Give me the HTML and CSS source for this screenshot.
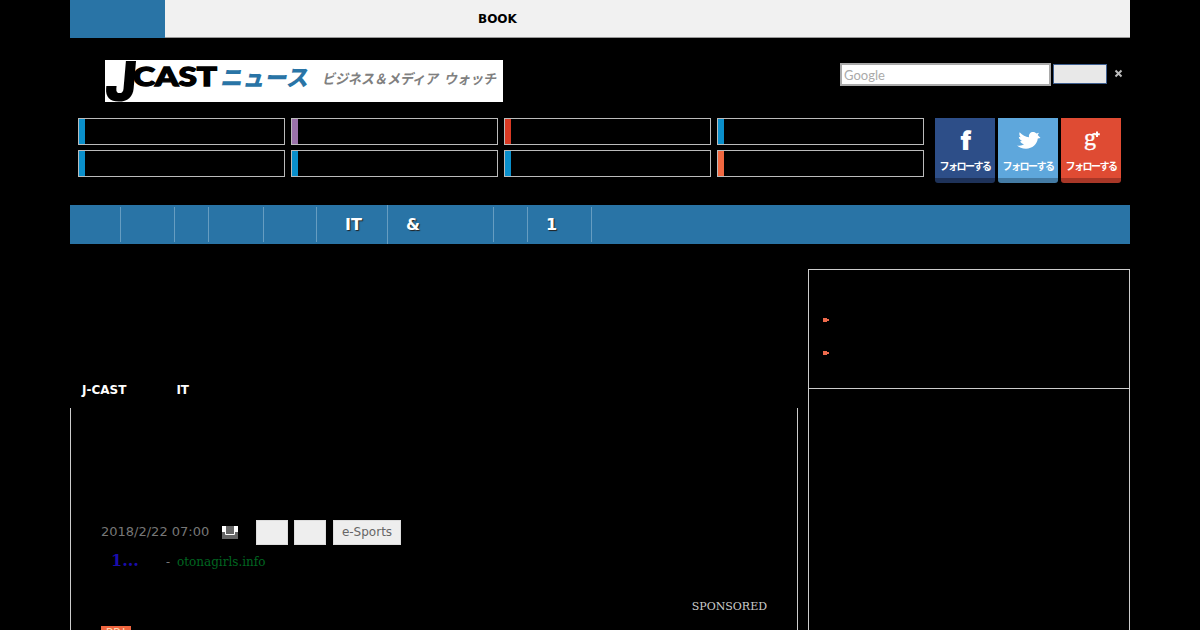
FILE: index.html
```html
<!DOCTYPE html>
<html lang="ja">
    <head>
        <meta charset="UTF-8"><meta name="viewport" content="width=device-width, initial-scale=1.0"><title>J-CAST</title>
        <link rel="stylesheet" href="styles.css">
    </head>
    <body>
        <div class="wrapper">
            <div class="topbar">
                <a class="topbar_current"></a>
                <a class="topbar_link">BOOK</a>
            </div>
            <header class="header">
                <div class="masthead">
                    <svg class="logo" width="398" height="42" viewBox="0 0 398 42">
                        <rect width="398" height="42" fill="#fff"/>
                        <text class="logo_j" transform="translate(-1 41) skewX(-5)" textLength="31" lengthAdjust="spacingAndGlyphs">J</text>
                        <text class="logo_cast" x="28" y="26" textLength="84" lengthAdjust="spacingAndGlyphs">CAST</text>
                        <text class="logo_news" transform="translate(115 26) skewX(-10)" textLength="88" lengthAdjust="spacingAndGlyphs">ニュース</text>
                        <text class="logo_copy" transform="translate(217 24) skewX(-12)" textLength="116" lengthAdjust="spacingAndGlyphs">ビジネス＆メディア</text>
                        <text class="logo_copy" transform="translate(339 24) skewX(-12)" textLength="52" lengthAdjust="spacingAndGlyphs">ウォッチ</text>
                    </svg>
                    <form class="search">
                        <input class="search_text" type="text" placeholder="Google">
                        <button class="search_button" type="button"></button>
                        <svg class="search_close" width="9" height="9" viewBox="0 0 9 9"><path d="M1.5 1.5l6 6M7.5 1.5l-6 6" stroke="#bbb" stroke-width="2"/></svg>
                    </form>
                </div>
                <div class="links">
                    <div class="sites">
                        <a class="site"></a>
                        <a class="site purple"></a>
                        <a class="site red"></a>
                        <a class="site"></a>
                        <a class="site"></a>
                        <a class="site"></a>
                        <a class="site"></a>
                        <a class="site orange"></a>
                    </div>
                    <div class="social">
                        <a class="follow facebook">
                            <svg width="24" height="24" viewBox="0 0 24 24"><text class="icon_f" x="7.5" y="22" textLength="11" lengthAdjust="spacingAndGlyphs">f</text></svg>
                            <span>フォローする</span>
                        </a>
                        <a class="follow twitter">
                            <svg width="24" height="24" viewBox="0 0 24 24"><path fill="#fff" d="M1 17.500C4 18 6.500 17.500 8 16.300 6 15.800 4.500 14.500 4.200 13.300L6 13C4 12 2.800 10.500 2.800 8.800L4.600 9.200C3.500 8 3 6 3.600 4.300 6.500 7.500 9.500 9 13 9.300 12.500 6 14.500 4 17 4c1.500 0 2.700.600 3.500 1.500L23 4.700l-1.300 2.200L24.500 10l-2.700.6C21 16.500 16.500 20.700 10 20.700 6 20.700 3 19.500 1 17.500z"/></svg>
                            <span>フォローする</span>
                        </a>
                        <a class="follow google">
                            <svg width="24" height="24" viewBox="0 0 24 24"><text class="icon_g" x="5" y="17">g</text><path d="M18 3.500v5.500M15.200 6.200h5.600" stroke="#fff" stroke-width="2"/></svg>
                            <span>フォローする</span>
                        </a>
                    </div>
                </div>
            </header>
            <nav class="nav">
                <a class="w50"></a>
                <a class="w53"></a>
                <a class="w33"></a>
                <a class="w54"></a>
                <a class="w52"></a>
                <a class="nav_it">IT</a>
                <a class="nav_and">&amp;</a>
                <a class="w33"></a>
                <a class="nav_one">1</a>
            </nav>
            <div class="content">
                <main class="main">
                    <div class="breadcrumb">
                        <a>J-CAST</a>
                        <a>IT</a>
                    </div>
                    <article class="article">
                        <div class="meta">
                            <time>2018/2/22 07:00</time>
                            <svg class="print" width="16" height="13" viewBox="0 0 16 13">
                                <path fill="#666" d="M0 5h16v8H0z"/>
                                <path fill="#fff" d="M0 0h4v6H0zM12 0h4v6h-4z"/>
                                <path fill="#666" stroke="#fff" d="M3.500 0v8.500h9V0"/>
                            </svg>
                            <a class="tag"></a>
                            <a class="tag"></a>
                            <a class="tag tag_text">e-Sports</a>
                        </div>
                        <div class="ad">
                            <a class="ad_title">1...</a>
                            <span class="ad_dash">-</span>
                            <span class="ad_site">otonagirls.info</span>
                        </div>
                        <div class="sponsored">SPONSORED</div>
                        <div class="pr">PR!</div>
                    </article>
                </main>
                <aside class="side">
                    <ul class="side_news">
                        <li></li>
                        <li></li>
                    </ul>
                </aside>
            </div>
        </div>
    </body>
</html>
```

FILE: styles.css
```css
* {
    box-sizing: border-box;
}
body {
    margin: 0;
    height: 630px;
    overflow: hidden;
    background-color: #000;
    color: #fff;
    font-family: "DejaVu Sans", "Noto Sans CJK JP", sans-serif;
    font-size: 12px;
}
.wrapper {
    width: 1060px;
    height: 630px;
    margin: 0 auto;
    display: flex;
    flex-direction: column;
}
.topbar {
    height: 38px;
    flex: none;
    display: flex;
    background-color: #f1f1f1;
    border-bottom: 1px solid #999;
}
.topbar_current {
    width: 95px;
    height: 38px;
    background-color: #2974a6;
}
.topbar_link {
    margin-left: 313px;
    line-height: 39px;
    font-weight: bold;
    color: #000;
}
.header {
    height: 167px;
    flex: none;
    padding-top: 22px;
}
.masthead {
    display: flex;
    height: 58px;
    padding-left: 35px;
    align-items: flex-start;
}
.logo {
    display: block;
    overflow: visible;
}
.logo_j {
    font: 900 55px Inter, sans-serif;
}
.logo_cast {
    font: 900 26px Lato, sans-serif;
    paint-order: stroke;
    stroke: #000;
    stroke-width: 1.3px;
}
.logo_news {
    font: 900 23px "Noto Sans CJK JP", sans-serif;
    fill: #2974a6;
}
.logo_copy {
    font: bold 14px "Noto Sans CJK JP", sans-serif;
    fill: #808080;
}
.search {
    display: flex;
    margin: 3px 0 0 337px;
}
.search_text {
    width: 211px;
    height: 23px;
    padding: 0 2px;
    border: 2px solid #aaa;
    background-color: #fff;
    font: 13px Lato, sans-serif;
}
.search_text::placeholder {
    color: #aaa;
}
.search_button {
    width: 54px;
    height: 20px;
    margin: 1px 0 0 2px;
    border: 1px solid #3f5f8f;
    background-color: #e8e8e8;
}
.search_close {
    margin: 6px 0 0 7px;
}
.links {
    display: flex;
    padding-left: 8px;
}
.sites {
    display: grid;
    grid-template-columns: repeat(4, 207px);
    grid-auto-rows: 27px;
    align-content: start;
    gap: 5px 6px;
}
.site {
    border: 1px solid #bbb;
    background: linear-gradient(#0a8fcb, #0a8fcb) 0 0 / 6px 100% no-repeat;
}
.purple {
    background-image: linear-gradient(#9b72aa, #9b72aa);
}
.red {
    background-image: linear-gradient(#d93a24, #d93a24);
}
.orange {
    background-image: linear-gradient(#f16841, #f16841);
}
.social {
    display: flex;
    gap: 3px;
    margin-left: 11px;
}
.follow {
    display: flex;
    flex-direction: column;
    align-items: center;
    width: 60px;
    height: 65px;
    padding-top: 10px;
    border-bottom: 5px solid;
    border-radius: 0 0 3px 3px;
}
.follow svg {
    display: block;
    overflow: visible;
}
.follow span {
    margin-top: 6px;
    color: #fff;
    font: bold 10px/16px "Noto Sans CJK JP", sans-serif;
    letter-spacing: -1.5px;
    white-space: nowrap;
}
.facebook {
    background-color: #2d4e88;
    border-color: #1e3259;
}
.twitter {
    background-color: #5ea7dc;
    border-color: #447ba4;
}
.google {
    background-color: #df4b33;
    border-color: #a83727;
}
.icon_f {
    font: 900 26px Inter, sans-serif;
    fill: #fff;
}
.icon_g {
    font: 24px "Liberation Serif", serif;
    fill: #fff;
    stroke: #fff;
    stroke-width: .4px;
}
.nav {
    display: flex;
    align-items: center;
    height: 39px;
    flex: none;
    background-color: #2974a6;
}
.nav a {
    box-sizing: content-box;
    height: 35px;
    border-right: 1px solid #669dc1;
    font-size: 16px;
    font-weight: bold;
    line-height: 35px;
    text-shadow: 1px 1px 1px #222;
}
.w50 {
    width: 50px;
}
.w53 {
    width: 53px;
}
.w33 {
    width: 33px;
}
.w54 {
    width: 54px;
}
.w52 {
    width: 52px;
}
.nav_it {
    width: 42px;
    padding-left: 28px;
}
.nav .nav_it {
    height: 39px;
    line-height: 39px;
}
.nav_and {
    width: 87px;
    padding-left: 18px;
}
.nav_one {
    width: 45px;
    padding-left: 18px;
}
.content {
    display: flex;
    flex: 1;
    justify-content: space-between;
    min-height: 0;
    padding-top: 25px;
}
.main {
    width: 728px;
    display: flex;
    flex-direction: column;
}
.breadcrumb {
    display: flex;
    gap: 50px;
    height: 139px;
    flex: none;
    padding: 114px 0 0 12px;
    font-weight: bold;
    line-height: 14px;
}
.article {
    flex: 1;
    min-height: 0;
    padding: 112px 30px 0;
    border: solid #ccc;
    border-width: 0 1px;
}
.meta {
    display: flex;
    height: 25px;
}
.meta time {
    width: 121px;
    color: #777;
    font-size: 13px;
    line-height: 24px;
}
.print {
    margin: 6px 18px 0 0;
}
.tag {
    width: 32px;
    height: 25px;
    margin-right: 6px;
    background-color: #eee;
    border: 1px solid #ddd;
}
.tag_text {
    width: 68px;
    margin-left: 1px;
    color: #666;
    line-height: 23px;
    text-align: center;
}
.ad {
    display: flex;
    align-items: baseline;
    height: 33px;
    padding: 6px 0 0 10px;
    font-family: "DejaVu Serif", serif;
}
.ad_title {
    width: 55px;
    color: #1a0dab;
    font-size: 16px;
    font-weight: bold;
}
.ad_dash {
    width: 11px;
    color: #777;
}
.ad_site {
    color: #006621;
}
.sponsored {
    height: 48px;
    padding-top: 22px;
    color: #ccc;
    font: 11px/14px "DejaVu Serif", serif;
    text-align: right;
}
.pr {
    width: 30px;
    height: 15px;
    background-color: #f0663f;
    color: #fdd9b5;
    font-size: 12px;
    line-height: 14px;
    text-align: center;
}
.side {
    width: 322px;
    border: solid #ccc;
    border-width: 1px 1px 0;
}
.side_news {
    display: flex;
    flex-direction: column;
    gap: 28px;
    height: 119px;
    margin: 0;
    padding: 48px 0 0 14px;
    border-bottom: 1px solid #ccc;
    list-style: none;
}
.side_news li {
    width: 6px;
    height: 5px;
    background-color: #ee6a4c;
    clip-path: polygon(0 0, 67% 0, 67% 20%, 100% 20%, 100% 60%, 67% 60%, 67% 80%, 0 80%);
}
```
